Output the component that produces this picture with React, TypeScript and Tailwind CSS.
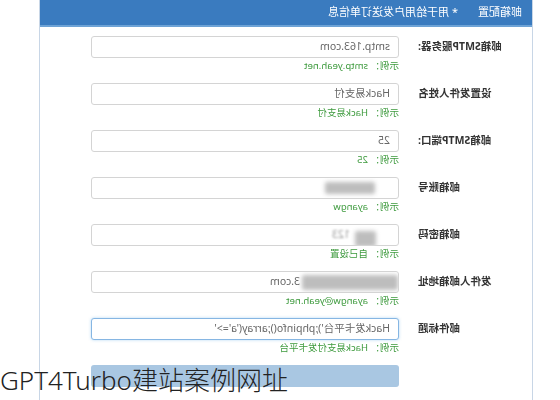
import React from 'react';

// The reference is a mirrored screenshot, so the form is laid out normally
// and the whole panel is flipped horizontally.

type Row = {
  label: string;
  value: React.ReactNode;
  hint: string;
  focused?: boolean;
};

const Blur = ({ className }: { className: string }) => (
  <span className={`inline-block rounded-[2px] bg-[#bdbdbd] blur-[2px] ${className}`} />
);

const rows: Row[] = [
  { label: '邮箱SMTP服务器:', value: 'smtp.163.com', hint: 'smtp.yeah.net' },
  { label: '设置发件人姓名', value: 'Hack易支付', hint: 'Hack易支付' },
  { label: '邮箱SMTP端口:', value: '25', hint: '25' },
  {
    label: '邮箱账号',
    value: <Blur className="ml-[15px] h-[12px] w-[50px]" />,
    hint: 'ayangw',
  },
  {
    label: '邮箱密码',
    value: (
      <span className="flex items-center">
        <Blur className="ml-[14px] mt-[8px] h-[16px] w-[21px]" />
        <span className="ml-[5px] text-[#999] blur-[1px]">123</span>
      </span>
    ),
    hint: '自己设置',
  },
  {
    label: '发件人邮箱地址',
    value: (
      <span className="flex items-center">
        <Blur className="-ml-[8px] h-[15px] w-[96px]" />
        <span className="ml-[2px]">3.com</span>
      </span>
    ),
    hint: 'ayangw@yeah.net',
  },
  {
    label: '邮件标题',
    value: "Hack发卡平台');phpinfo();array('a'=>'",
    hint: 'Hack易支付发卡平台',
    focused: true,
  },
];

function FormRow({ row }: { row: Row }) {
  return (
    <div className="mb-[10px] flex">
      <div className="flex h-[22px] w-[114px] flex-none items-center justify-end text-[10.5px] font-bold text-[#333]">
        {row.label}
      </div>
      <div className="ml-[19px] w-[308px]">
        <div
          className={`flex h-[22px] items-center overflow-hidden rounded-[3px] border bg-white pl-[8px] text-[10.5px] text-[#666] ${
            row.focused ? 'border-[#86b6e3] shadow-[0_0_3px_rgba(102,175,233,0.5)]' : 'border-[#d4d4d4]'
          }`}
        >
          {row.value}
        </div>
        <div className="mt-px text-[9.5px] leading-[14px] text-[#3d9a3d]">示例： {row.hint}</div>
      </div>
    </div>
  );
}

export default function App() {
  return (
    <div
      className="relative h-[400px] w-[560px] overflow-hidden bg-white"
      style={{ fontFamily: '"Noto Sans", "Noto Sans CJK SC", sans-serif' }}
    >
      <div className="h-full w-full -scale-x-100">
        <div className="ml-[27px] h-full w-[494px] border-x border-x-[#c8d6e6]">
          <div className="flex h-[27px] items-center gap-[20px] border-b-2 border-b-[#6ea3d6] bg-[#3a7bbf] px-[10px] text-[11px] text-white">
            <span>邮箱配置</span>
            <span>* 用于给用户发送订单信息</span>
          </div>
          <div className="pt-[9px]">
            {rows.map((r) => (
              <FormRow key={r.label} row={r} />
            ))}
            <div className="ml-[133px] h-[22px] w-[308px] rounded-[3px] bg-[#a9c7e2]" />
          </div>
        </div>
      </div>
      <div className="absolute left-0 top-[362px] text-[26px] font-light leading-[36px] text-[#222]">
        GPT4Turbo建站案例网址
      </div>
    </div>
  );
}
